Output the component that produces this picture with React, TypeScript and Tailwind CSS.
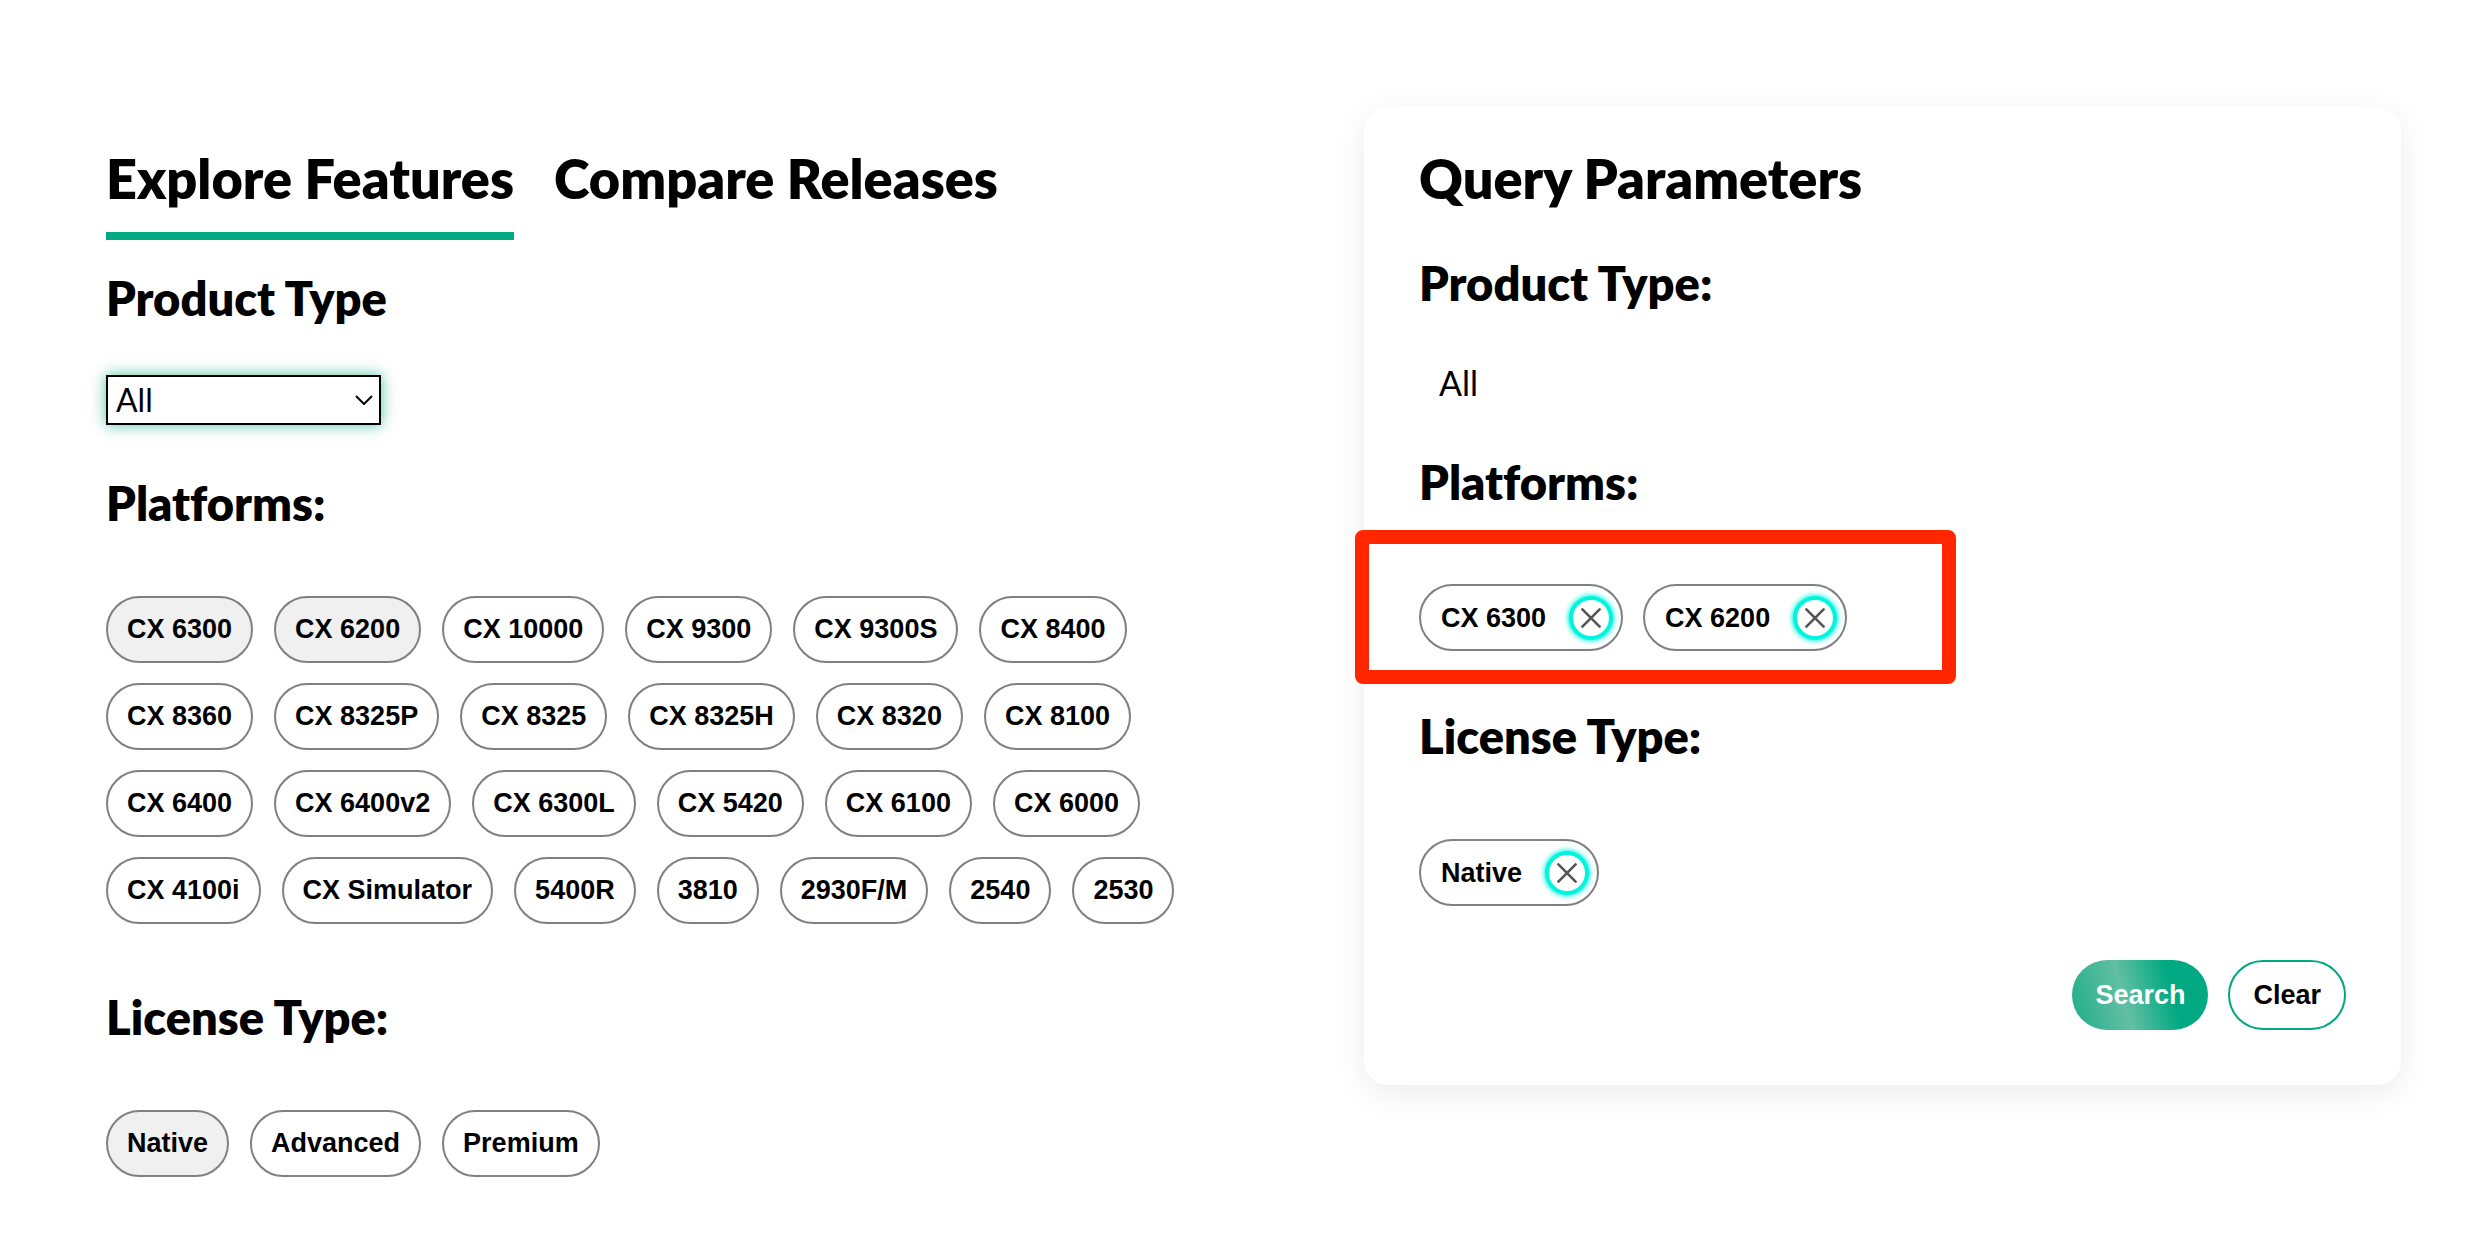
import { useState } from "react";
import type { ReactNode } from "react";

const PLATFORMS = [
  "CX 6300", "CX 6200", "CX 10000", "CX 9300", "CX 9300S", "CX 8400",
  "CX 8360", "CX 8325P", "CX 8325", "CX 8325H", "CX 8320", "CX 8100",
  "CX 6400", "CX 6400v2", "CX 6300L", "CX 5420", "CX 6100", "CX 6000",
  "CX 4100i", "CX Simulator", "5400R", "3810", "2930F/M", "2540", "2530",
];
const LICENSES = ["Native", "Advanced", "Premium"];
const PRODUCT_TYPES = ["All", "Switches", "Simulator"];

const toggle = (list: string[], item: string) =>
  list.includes(item) ? list.filter((i) => i !== item) : [...list, item];

function SectionTitle({ children }: { children: ReactNode }) {
  return <h2 className="text-[47px] leading-14 font-extrabold">{children}</h2>;
}

function Chip({ label, selected, onClick }: { label: string; selected: boolean; onClick: () => void }) {
  return (
    <button
      type="button"
      aria-pressed={selected}
      onClick={onClick}
      className={`h-[67px] rounded-full border-2 border-[#808080] px-[19px] pb-0.5 font-['Liberation_Sans',Arial,sans-serif] text-[27px] leading-8 font-bold ${
        selected ? "bg-[#f0f0f0]" : "bg-white"
      }`}
    >
      {label}
    </button>
  );
}

function ChipGroup({ items, selected, onToggle }: { items: string[]; selected: string[]; onToggle: (item: string) => void }) {
  return (
    <div className="flex flex-wrap gap-x-[21px] gap-y-5">
      {items.map((item) => (
        <Chip key={item} label={item} selected={selected.includes(item)} onClick={() => onToggle(item)} />
      ))}
    </div>
  );
}

function RemovableChip({ label, onRemove }: { label: string; onRemove: () => void }) {
  return (
    <span className="flex h-[67px] items-center gap-[27px] rounded-full border-2 border-[#808080] bg-white pr-3 pl-5 font-['Liberation_Sans',Arial,sans-serif] text-[27px] leading-8 font-bold">
      {label}
      <button
        type="button"
        aria-label={`Remove ${label}`}
        onClick={onRemove}
        className="flex size-9 items-center justify-center rounded-full bg-white shadow-[0_0_0_4px_#00f5de,0_0_5px_5px_#00f5de]"
      >
        <svg viewBox="0 0 20 20" className="size-5" fill="none" stroke="#555555" strokeWidth="2.6" strokeLinecap="round">
          <path d="M1.4 1.4 18.6 18.6M18.6 1.4 1.4 18.6" />
        </svg>
      </button>
    </span>
  );
}

export default function App() {
  const [tab, setTab] = useState(0);
  const [productType, setProductType] = useState("All");
  const [platforms, setPlatforms] = useState(["CX 6300", "CX 6200"]);
  const [licenses, setLicenses] = useState(["Native"]);

  const togglePlatform = (p: string) => setPlatforms(toggle(platforms, p));
  const toggleLicense = (l: string) => setLicenses(toggle(licenses, l));
  const clear = () => {
    setProductType("All");
    setPlatforms([]);
    setLicenses([]);
  };

  return (
    <main className="grid min-h-screen grid-cols-[1160fr_1037fr] items-start gap-x-[98px] bg-white pt-[107px] pr-[69px] pb-[78px] pl-[106px] font-[Lato,sans-serif] text-black [font-variant-ligatures:none]">
      <section className="pt-10">
        <div role="tablist" className="flex gap-10">
          {["Explore Features", "Compare Releases"].map((name, i) => (
            <button
              key={name}
              type="button"
              role="tab"
              aria-selected={tab === i}
              onClick={() => setTab(i)}
              className={`border-b-8 pb-[21px] text-[54px] leading-16 font-extrabold ${
                tab === i ? "border-[#01a982]" : "border-transparent"
              }`}
            >
              {name}
            </button>
          ))}
        </div>

        <label htmlFor="product-type" className="mt-[30px] block text-[47px] leading-14 font-extrabold">
          Product Type
        </label>
        <div className="relative mt-[49px] w-[275px]">
          <select
            id="product-type"
            value={productType}
            onChange={(e) => setProductType(e.target.value)}
            className="block h-[50px] w-full appearance-none border-2 border-black bg-white pr-10 pl-2 text-[32px] leading-10 shadow-[0_0_14px_rgba(1,169,130,0.7)] outline-none"
          >
            {PRODUCT_TYPES.map((t) => (
              <option key={t}>{t}</option>
            ))}
          </select>
          <svg
            viewBox="0 0 18 10"
            className="pointer-events-none absolute top-5 right-2 h-[10px] w-[18px]"
            fill="none"
            stroke="black"
            strokeWidth="2"
          >
            <path d="M1 1l8 8 8-8" />
          </svg>
        </div>

        <div className="mt-[50px] flex flex-col gap-[65px]">
          <SectionTitle>Platforms:</SectionTitle>
          <ChipGroup items={PLATFORMS} selected={platforms} onToggle={togglePlatform} />
          <SectionTitle>License Type:</SectionTitle>
          <ChipGroup items={LICENSES} selected={licenses} onToggle={toggleLicense} />
        </div>
      </section>

      <aside className="rounded-3xl bg-white px-[55px] pt-10 pb-[55px] shadow-[0_8px_32px_rgba(0,0,0,0.08)]">
        <h1 className="text-[54px] leading-16 font-extrabold">Query Parameters</h1>

        <div className="mt-11">
          <SectionTitle>Product Type:</SectionTitle>
          <p className="mt-[52px] pl-5 text-[34px] leading-10">{productType}</p>
        </div>

        <div className="mt-[51px]">
          <SectionTitle>Platforms:</SectionTitle>
          <div className="relative mt-[74px] flex min-h-[67px] flex-wrap gap-5">
            {platforms.map((p) => (
              <RemovableChip key={p} label={p} onRemove={() => togglePlatform(p)} />
            ))}
            <div className="pointer-events-none absolute -top-[54px] -left-16 h-[154px] w-[601px] rounded-lg border-14 border-[#ff2600]" />
          </div>
        </div>

        <div className="mt-[57px]">
          <SectionTitle>License Type:</SectionTitle>
          <div className="mt-[75px] flex min-h-[67px] flex-wrap gap-5">
            {licenses.map((l) => (
              <RemovableChip key={l} label={l} onRemove={() => toggleLicense(l)} />
            ))}
          </div>
        </div>

        <div className="mt-[54px] flex justify-end gap-5 font-['Liberation_Sans',Arial,sans-serif] text-[27px] leading-8 font-bold">
          <button
            type="button"
            className="h-[70px] rounded-full bg-[linear-gradient(75deg,#1fad89_0%,#62bfa2_39%,#01a982_71%)] px-[23px] text-white"
          >
            Search
          </button>
          <button type="button" onClick={clear} className="h-[70px] rounded-full border-2 border-[#01a982] bg-white px-[23px]">
            Clear
          </button>
        </div>
      </aside>
    </main>
  );
}
